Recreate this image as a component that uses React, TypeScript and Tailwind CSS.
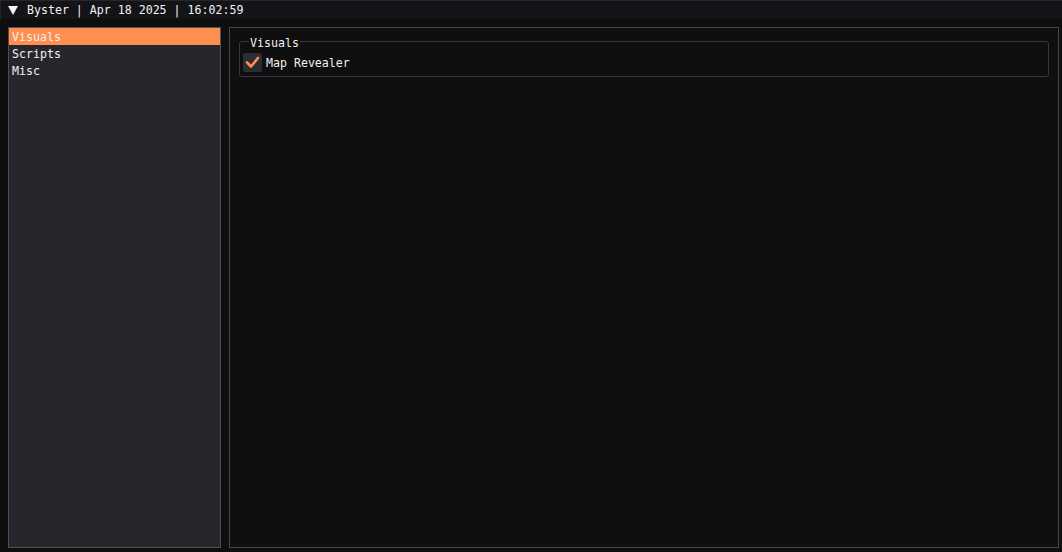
import React from "react";

const mono = "font-['DejaVu_Sans_Mono','Liberation_Mono',monospace] text-[11.6px] leading-none";

const tabs = ["Visuals", "Scripts", "Misc"];

export default function App() {
  return (
    <div className={`w-[1062px] h-[552px] bg-[#0e0e0f] flex flex-col text-[#f2f2f2] ${mono}`}>
      {/* title bar */}
      <div className="h-[19px] bg-[#131318] border-t border-l border-[#26262c] flex items-center pt-[2px]">
        <svg width="10" height="9" viewBox="0 0 10 9" className="ml-[7px] -mt-[1px]">
          <polygon points="0,0 10,0 5,9" fill="#f2f2f2" />
        </svg>
        <span className="ml-[9px] whitespace-pre">Byster | Apr 18 2025 | 16:02:59</span>
      </div>

      {/* body */}
      <div className="flex-1 flex gap-[8px] pl-[8px] pr-[3px] pt-[8px] pb-[4px]">
        {/* tab list */}
        <div className="w-[213px] bg-[#26272d] border border-[#4f4f5a] flex flex-col">
          {tabs.map((t, i) => (
            <div
              key={t}
              className={`h-[17px] flex items-center pl-[3px] pt-[2px] ${i === 0 ? "bg-[#fe8f4e]" : ""}`}
            >
              {t}
            </div>
          ))}
        </div>

        {/* content */}
        <div className="flex-1 bg-[#0f0f10] border border-[#46464c] pt-[13px] px-[9px]">
          <div className="relative h-[36px] border border-[#38383e] rounded-[3px] flex items-center pl-[3px] pt-[6px]">
            <span className="absolute left-[9px] -top-[4px] px-px bg-[#0f0f10]">Visuals</span>
            <div className="w-[19px] h-[19px] bg-[#2c2c31] rounded-[2px] flex items-center justify-center">
              <svg width="19" height="19" viewBox="0 0 19 19">
                <polyline
                  points="4,9.5 8,13.5 15,5"
                  fill="none"
                  stroke="#fe8f4e"
                  strokeWidth="2.6"
                  strokeLinecap="round"
                  strokeLinejoin="round"
                />
              </svg>
            </div>
            <span className="ml-[4px] pt-[3px]">Map Revealer</span>
          </div>
        </div>
      </div>
    </div>
  );
}
